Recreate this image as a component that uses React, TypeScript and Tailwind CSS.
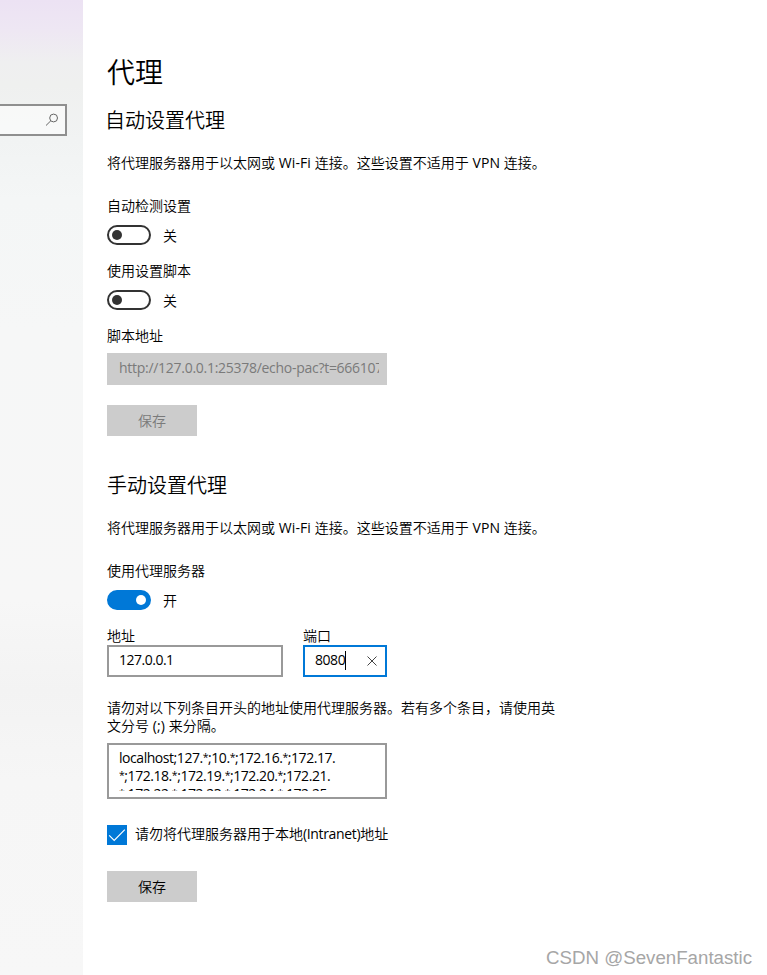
import { Fragment, ReactNode } from "react";
import { cva } from "class-variance-authority";
import clsx from "clsx";

const BYPASS_LINES = [
  "localhost;127.*;10.*;172.16.*;172.17.",
  "*;172.18.*;172.19.*;172.20.*;172.21.",
  "*;172.22.*;172.23.*;172.24.*;172.25.",
];

const Latin = ({ children }: { children: ReactNode }) => (
  <span className="font-normal tracking-[0.1px]">{children}</span>
);

const Label = ({ children }: { children: ReactNode }) => (
  <div className="h-[18px] whitespace-nowrap">{children}</div>
);

type ToggleProps = {
  label: string;
  checked?: boolean;
};

const Toggle = ({ label, checked = false }: ToggleProps) => (
  <div className="mb-[17px]">
    <Label>{label}</Label>
    <div className="mt-2.5 flex h-5 items-center">
      <button
        role="switch"
        aria-checked={checked}
        aria-label={label}
        className={clsx(
          "flex h-5 w-11 items-center rounded-full border-2 px-[3px]",
          checked
            ? "justify-end border-[#0078d7] bg-[#0078d7]"
            : "border-[#333] bg-white"
        )}
      >
        <span
          className={clsx(
            "size-2.5 rounded-full",
            checked ? "bg-white" : "bg-[#333]"
          )}
        />
      </button>
      <span className="ml-3 pt-0.5">{checked ? "开" : "关"}</span>
    </div>
  </div>
);

const field = cva("flex h-8 items-center border-2 px-2.5 pb-0.5 font-normal", {
  variants: {
    state: {
      idle: "border-[#999] bg-white",
      focused: "border-[#0078d7] bg-white",
      disabled: "border-[#ccc] bg-[#ccc] pr-1.5 text-[#7a7a7a]",
    },
  },
});

const SaveButton = ({ disabled = false }: { disabled?: boolean }) => (
  <button
    disabled={disabled}
    className={clsx(
      "block h-[31px] w-[90px] bg-[#ccc] pt-px",
      disabled && "text-[#7a7a7a]"
    )}
  >
    保存
  </button>
);

const SectionIntro = () => (
  <p className="mt-[19px] mb-[25px] h-[18px] whitespace-nowrap">
    将代理服务器用于以太网或<Latin> Wi-Fi </Latin>连接。这些设置不适用于
    <Latin> VPN </Latin>连接。
  </p>
);

const Sidebar = () => (
  <aside className="w-[83px] shrink-0 bg-[linear-gradient(180deg,#ece2f3_0px,#eee7f3_30px,#efeff0_62px,#eff0ef_85px,#f1f3f3_140px,#f4f6f6_200px,#f6f7f7_330px,#f7f7f7_600px,#f3f3f3_690px,#f6f6f6_780px,#f7f7f7_975px)] pt-[104px]">
    <div className="flex h-8 w-[67px] items-center justify-end border-2 border-l-0 border-[#8f8f8f] bg-white/50 pr-[6px]">
      <svg width="14" height="14" viewBox="0 0 14 14" fill="none" stroke="#666">
        <circle cx="8.6" cy="5" r="3.9" />
        <path d="M5.8 7.8 1 12.5" />
      </svg>
    </div>
  </aside>
);

const BypassList = () => (
  <div className="mt-2 h-14 w-[280px] border-2 border-[#999] px-2.5 py-1">
    <div className="h-[42px] overflow-hidden font-normal whitespace-nowrap tracking-[-0.45px]">
      {BYPASS_LINES.map((line) => (
        <div key={line} className="h-[18px]">
          {line.split("*").map((part, i) => (
            <Fragment key={i}>
              {i > 0 && (
                <span className="align-[2.5px] text-[10.5px] leading-none">
                  *
                </span>
              )}
              {part}
            </Fragment>
          ))}
        </div>
      ))}
    </div>
  </div>
);

const App = () => (
  <div className="relative flex h-[975px] w-[767px] overflow-hidden bg-white font-['Open_Sans','Noto_Sans_CJK_SC',sans-serif] text-sm leading-[18px] font-[350] text-black">
    <Sidebar />
    <main className="flex-1 pt-[52px] pl-6">
      <h1 className="h-10 text-[28px] leading-10 font-[350]">代理</h1>

      <section>
        <h2 className="mt-[15px] -ml-0.5 h-7 text-xl leading-7 font-[350]">
          自动设置代理
        </h2>
        <SectionIntro />
        <Toggle label="自动检测设置" />
        <Toggle label="使用设置脚本" />
        <Label>脚本地址</Label>
        <div className={field({ state: "disabled", className: "mt-2 w-[280px]" })}>
          <span className="overflow-hidden whitespace-nowrap tracking-[-0.28px]">
            http://127.0.0.1:25378/echo-pac?t=66610788
          </span>
        </div>
        <div className="mt-5">
          <SaveButton disabled />
        </div>
      </section>

      <section>
        <h2 className="mt-9 h-7 text-xl leading-7 font-[350]">手动设置代理</h2>
        <SectionIntro />
        <Toggle label="使用代理服务器" checked />
        <div className="flex gap-5">
          <div className="w-44">
            <Label>地址</Label>
            <div className={field({ state: "idle" })}>
              <span className="tracking-[-0.5px]">127.0.0.1</span>
            </div>
          </div>
          <div className="w-21">
            <Label>端口</Label>
            <div className={field({ state: "focused" })}>
              <span className="tracking-[-0.45px]">8080</span>
              <span className="h-[19px] w-px bg-black" />
              <svg
                className="mt-0.5 -mr-0.5 ml-auto"
                width="10"
                height="10"
                viewBox="0 0 10 10"
                stroke="#444"
              >
                <path d="M.5.5l9 9M9.5.5l-9 9" />
              </svg>
            </div>
          </div>
        </div>

        <p className="mt-[22px] whitespace-nowrap">
          请勿对以下列条目开头的地址使用代理服务器。若有多个条目，请使用英
          <br />
          文分号<Latin> (;) </Latin>来分隔。
        </p>
        <BypassList />

        <label className="mt-[26px] flex h-5 items-center whitespace-nowrap">
          <span className="mr-2 size-5 bg-[#0078d7]">
            <svg
              width="20"
              height="20"
              viewBox="0 0 20 20"
              fill="none"
              stroke="white"
              strokeWidth="1.2"
            >
              <path d="M2.2 10.3l5 5L17.8 4.7" />
            </svg>
          </span>
          <span className="pb-0.5">
            请勿将代理服务器用于本地
            <span className="font-normal tracking-[-0.35px]">(Intranet)</span>
            地址
          </span>
        </label>
        <div className="mt-[26px]">
          <SaveButton />
        </div>
      </section>
    </main>
    <div className="absolute right-[15px] bottom-[5px] font-['Liberation_Sans',sans-serif] text-[18.7px] leading-6 whitespace-nowrap text-[#a6a6a6] [text-shadow:1px_1px_0_#fff]">
      CSDN @SevenFantastic
    </div>
  </div>
);

export default App;
